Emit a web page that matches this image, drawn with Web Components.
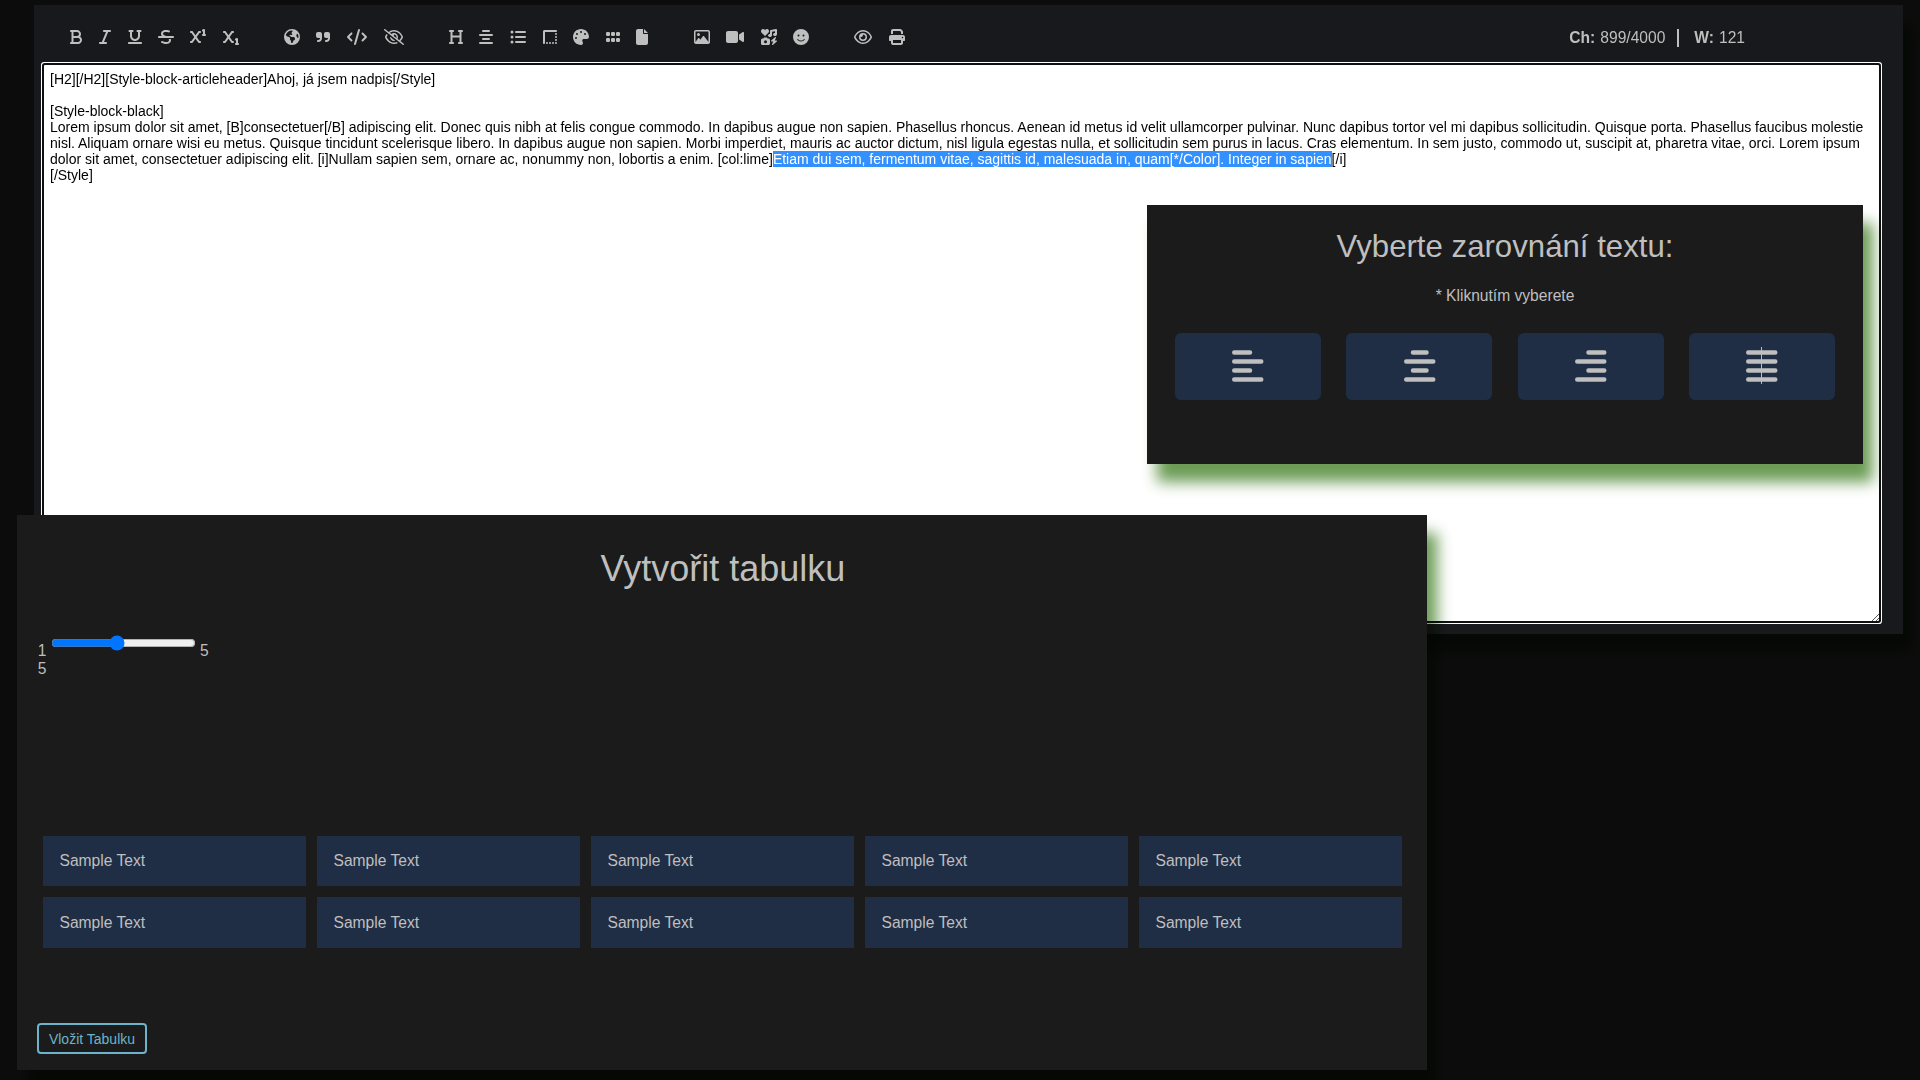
<!DOCTYPE html>
<html lang="cs"><head><meta charset="utf-8"><title>Editor</title>
<style>
html,body{margin:0;height:100%;overflow:hidden;background:#0c0c0c}
body{font-family:"Liberation Sans",Arial,sans-serif;font-size:15.6px;line-height:1.15;color:#bfbfbf;position:relative}
align-dialog{position:absolute;left:1147px;top:205px}
table-dialog{position:absolute;left:17px;top:515px}
</style></head><body>
<bb-editor>
<bb-toolbar slot="toolbar"></bb-toolbar>
<bb-textarea>[H2][/H2][Style-block-articleheader]Ahoj, já jsem nadpis[/Style]

[Style-block-black]
Lorem ipsum dolor sit amet, [B]consectetuer[/B] adipiscing elit. Donec quis nibh at felis congue commodo. In dapibus augue non sapien. Phasellus rhoncus. Aenean id metus id velit ullamcorper pulvinar. Nunc dapibus tortor vel mi dapibus sollicitudin. Quisque porta. Phasellus faucibus molestie nisl. Aliquam ornare wisi eu metus. Quisque tincidunt scelerisque libero. In dapibus augue non sapien. Morbi imperdiet, mauris ac auctor dictum, nisl ligula egestas nulla, et sollicitudin sem purus in lacus. Cras elementum. In sem justo, commodo ut, suscipit at, pharetra vitae, orci. Lorem ipsum dolor sit amet, consectetuer adipiscing elit. [i]Nullam sapien sem, ornare ac, nonummy non, lobortis a enim. [col:lime]<bb-mark>Etiam dui sem, fermentum vitae, sagittis id, malesuada in, quam[*/Color]. Integer in sapien</bb-mark>[/i]
[/Style]</bb-textarea>
</bb-editor>
<align-dialog></align-dialog>
<table-dialog></table-dialog>
<script>
const X='M32 64C14.3 64 0 78.3 0 96s14.3 32 32 32H47.3l89.6 128L47.3 384H32c-17.7 0-32 14.3-32 32s14.3 32 32 32H64c10.4 0 20.2-5.1 26.2-13.6L176 311.8l85.8 122.6c6 8.6 15.8 13.6 26.2 13.6h32c17.7 0 32-14.3 32-32s-14.3-32-32-32H304.7L215.1 256l89.6-128H320c17.7 0 32-14.3 32-32s-14.3-32-32-32H288c-10.4 0-20.2 5.1-26.2 13.6L176 200.2 90.2 77.6C84.2 69.1 74.4 64 64 64H32z';
const one='c0-11.1-5.7-21.4-15.2-27.2s-21.2-6.4-31.1-1.4l-32 16c-15.8 7.9-22.2 27.1-14.3 42.9c5.6 11.2 16.9 17.7 28.6 17.7v80c-17.7 0-32 14.3-32 32s14.3 32 32 32h32 32c17.7 0 32-14.3 32-32s-14.3-32-32-32z';
const dot=(x,y,r=32)=>`M${x-r} ${y}a${r} ${r} 0 1 0 ${2*r} 0a${r} ${r} 0 1 0 ${-2*r} 0z`;
const bar=(x,y,w)=>`M${x+32} ${y}h${w-64}a32 32 0 1 1 0 64h${64-w}a32 32 0 1 1 0-64z`;
const sq=(x,y)=>`M${x+40} ${y}h48a40 40 0 0 1 40 40v48a40 40 0 0 1-40 40h-48a40 40 0 0 1-40-40v-48a40 40 0 0 1 40-40z`;
const ICONS={
bold:[384,'M0 64C0 46.3 14.3 32 32 32H80 96 224c70.7 0 128 57.3 128 128c0 31.3-11.3 60.1-30 82.3c37.1 22.4 62 63.1 62 109.7c0 70.7-57.3 128-128 128H96 80 32c-17.7 0-32-14.3-32-32s14.3-32 32-32H48V256 96H32C14.3 96 0 81.7 0 64zM224 224c35.3 0 64-28.7 64-64s-28.7-64-64-64H112V224H224zM112 288V416H256c35.3 0 64-28.7 64-64s-28.7-64-64-64H224 112z'],
italic:[384,'M128 64c0-17.7 14.3-32 32-32H352c17.7 0 32 14.3 32 32s-14.3 32-32 32H293.3L160 416h64c17.7 0 32 14.3 32 32s-14.3 32-32 32H32c-17.7 0-32-14.3-32-32s14.3-32 32-32H90.7L224 96H160c-17.7 0-32-14.3-32-32z'],
underline:[448,'M16 64c0-17.7 14.3-32 32-32h96c17.7 0 32 14.3 32 32s-14.3 32-32 32H128V224c0 53 43 96 96 96s96-43 96-96V96H304c-17.7 0-32-14.3-32-32s14.3-32 32-32h96c17.7 0 32 14.3 32 32s-14.3 32-32 32H384V224c0 88.4-71.6 160-160 160s-160-71.6-160-160V96H48C30.3 96 16 81.7 16 64zM0 448c0-17.7 14.3-32 32-32H416c17.7 0 32 14.3 32 32s-14.3 32-32 32H32c-17.7 0-32-14.3-32-32z'],
strike:[512,'M161.3 144c3.2-17.2 14-30.1 33.7-38.6c21.1-9 51.8-12.3 88.6-6.5c11.9 1.9 48.8 9.1 60.1 12c17.1 4.5 34.6-5.6 39.2-22.7s-5.6-34.6-22.7-39.2c-14.3-3.8-53.6-11.4-66.6-13.4c-44.7-7-88.3-4.2-123.7 10.9c-36.5 15.6-64.4 44.8-71.8 87.3c-.1 .6-.2 1.1-.2 1.7c-2.8 23.9 .5 45.6 10.1 64.6c4.5 9 10.2 16.9 16.7 23.9H32c-17.7 0-32 14.3-32 32s14.3 32 32 32H480c17.7 0 32-14.3 32-32s-14.3-32-32-32H270.1c-.1 0-.3-.1-.4-.1l-1.1-.3c-36-10.8-65.2-19.6-85.2-33.1c-9.3-6.3-15-12.6-18.2-19.1c-3.1-6.1-5.2-14.6-3.8-27.4zM348.9 337.2c2.7 6.5 4.4 15.8 1.9 30.1c-3 17.6-13.8 30.8-33.9 39.4c-21.1 9-51.7 12.3-88.5 6.5c-18-2.9-49.1-13.5-74.4-22.1c-5.6-1.9-11-3.7-15.9-5.4c-16.8-5.6-34.9 3.5-40.5 20.3s3.5 34.9 20.3 40.5c3.6 1.2 7.9 2.7 12.7 4.3c24.9 8.5 63.6 21.7 87.6 25.6l.2 0c44.7 7 88.3 4.2 123.7-10.9c36.5-15.6 64.4-44.8 71.8-87.3c3.6-21 2.7-40.4-3.1-58.1H335.1c7 5.6 11.4 11.2 13.9 17.2z'],
sup:[512,X+'M480 32'+one],
sub:[512,X+'M480 320'+one],
globe:[512,'M57.7 193l9.4 16.4c8.3 14.5 21.9 25.2 38 29.8L163 255.7c17.2 4.9 29 20.6 29 38.5v39.9c0 11 6.2 21 16 25.9s16 14.9 16 25.9v39c0 15.6 14.9 26.9 29.9 22.6c16.1-4.6 28.6-17.5 32.7-33.8l2.8-11.2c4.2-16.9 15.2-31.4 30.3-40l8.1-4.6c15-8.5 24.2-24.5 24.2-41.7v-8.3c0-12.7-5.1-24.9-14.1-33.9l-3.9-3.9c-9-9-21.2-14.1-33.9-14.1H257c-11.1 0-22.1-2.9-31.8-8.4l-34.5-19.7c-4.3-2.5-7.6-6.5-9.2-11.2c-3.2-9.6 1.1-20 10.2-24.5l5.9-3c6.6-3.3 14.3-3.9 21.3-1.5l23.2 7.7c8.2 2.7 17.2-.4 21.9-7.5c4.7-7 4.2-16.3-1.2-22.8l-13.6-16.3c-10-12-9.9-29.5 .3-41.3l15.7-18.3c8.8-10.3 10.2-25 3.5-36.7l-2.4-4.2c-3.5-.2-6.9-.3-10.4-.3C163.1 48 84.4 108.9 57.7 193zM464 256c0-36.8-9.6-71.4-26.4-101.5L412 164.8c-15.7 6.3-23.8 23.8-18.5 39.8l16.9 50.7c3.5 10.4 12 18.3 22.6 20.9l29.1 7.3c1.2-9 1.8-18.2 1.8-27.5zM0 256a256 256 0 1 1 512 0A256 256 0 1 1 0 256z'],
quote:[448,'M448 296c0 66.3-53.7 120-120 120h-8c-17.7 0-32-14.3-32-32s14.3-32 32-32h8c30.9 0 56-25.1 56-56v-8H320c-35.3 0-64-28.7-64-64V160c0-35.3 28.7-64 64-64h64c35.3 0 64 28.7 64 64v32 32 72zm-256 0c0 66.3-53.7 120-120 120H64c-17.7 0-32-14.3-32-32s14.3-32 32-32h8c30.9 0 56-25.1 56-56v-8H64c-35.3 0-64-28.7-64-64V160c0-35.3 28.7-64 64-64h64c35.3 0 64 28.7 64 64v32 32 72z'],
code:[640,'M392.8 1.2c-17-4.9-34.7 5-39.6 22l-128 448c-4.9 17 5 34.7 22 39.6s34.7-5 39.6-22l128-448c4.9-17-5-34.7-22-39.6zm80.6 120.1c-12.5 12.5-12.5 32.8 0 45.3L562.7 256l-89.4 89.4c-12.5 12.5-12.5 32.8 0 45.3s32.8 12.5 45.3 0l112-112c12.5-12.5 12.5-32.8 0-45.3l-112-112c-12.5-12.5-32.8-12.5-45.3 0zm-306.7 0c-12.5-12.5-32.8-12.5-45.3 0l-112 112c-12.5 12.5-12.5 32.8 0 45.3l112 112c12.5 12.5 32.8 12.5 45.3 0s12.5-32.8 0-45.3L77.3 256l89.4-89.4c12.5-12.5 12.5-32.8 0-45.3z'],
eyeslash:[640,'M38.8 5.1C28.4-3.1 13.3-1.2 5.1 9.2S-1.2 34.7 9.2 42.9l592 464c10.4 8.2 25.5 6.3 33.7-4.1s6.3-25.5-4.1-33.7L525.6 386.7c39.6-40.6 66.4-86.1 79.9-118.4c3.3-7.9 3.3-16.7 0-24.6c-14.9-35.7-46.2-87.7-93-131.1C465.5 68.8 400.8 32 320 32c-68.2 0-125 26.3-169.3 60.8L38.8 5.1zm151 118.3C226 97.7 269.5 80 320 80c65.2 0 118.8 29.6 159.9 67.7C518.4 183.5 545 226 558.6 256c-12.6 28-36.6 66.8-70.9 100.9l-53.8-42.2c9.1-17.6 14.2-37.5 14.2-58.7c0-70.7-57.3-128-128-128c-32.2 0-61.7 11.9-84.2 31.5l-46.1-36.1zM394.9 284.2l-81.5-63.9c4.2-8.5 6.6-18.2 6.6-28.3c0-5.5-.7-10.9-2-16c.7 0 1.3 0 2 0c44.2 0 80 35.8 80 80c0 9.9-1.8 19.4-5.1 28.2zm9.4 130.3C378.8 425.4 350.7 432 320 432c-65.2 0-118.8-29.6-159.9-67.7C121.6 328.5 95 286 81.4 256c8.3-18.4 21.5-41.5 39.4-64.8L83.1 161.5C60.3 191.2 44 220.8 34.5 243.7c-3.3 7.9-3.3 16.7 0 24.6c14.9 35.7 46.2 87.7 93 131.1C174.5 443.2 239.2 480 320 480c47.8 0 89.9-12.9 126.2-32.5l-41.9-33zM192 256c0 70.7 57.3 128 128 128c13.3 0 26.1-2 38.2-5.8L302 334c-23.5-5.4-43.1-21.2-53.7-42.3l-56.1-44.2c-.2 2.8-.3 5.6-.3 8.5z'],
heading:[448,'M0 64C0 46.3 14.3 32 32 32H80h48c17.7 0 32 14.3 32 32s-14.3 32-32 32H112V208H336V96H320c-17.7 0-32-14.3-32-32s14.3-32 32-32h48 48c17.7 0 32 14.3 32 32s-14.3 32-32 32H400V240 416h16c17.7 0 32 14.3 32 32s-14.3 32-32 32H368 320c-17.7 0-32-14.3-32-32s14.3-32 32-32h16V272H112V416h16c17.7 0 32 14.3 32 32s-14.3 32-32 32H80 32c-17.7 0-32-14.3-32-32s14.3-32 32-32H48V240 96H32C14.3 96 0 81.7 0 64z'],
center:[448,bar(96,32,256)+bar(0,160,448)+bar(96,288,256)+bar(0,416,448)],
left:[448,bar(0,32,288)+bar(0,160,448)+bar(0,288,288)+bar(0,416,448)],
right:[448,bar(160,32,288)+bar(0,160,448)+bar(160,288,288)+bar(0,416,448)],
justify:[448,bar(0,32,448)+bar(0,160,448)+bar(0,288,448)+bar(0,416,448)],
list:[512,dot(64,96,48)+dot(64,256,48)+dot(64,416,48)+bar(160,64,352)+bar(160,224,352)+bar(160,384,352)],
border:[448,'M0 448c0 17.7 14.3 32 32 32s32-14.3 32-32V96H416c17.7 0 32-14.3 32-32s-14.3-32-32-32H48C21.5 32 0 53.5 0 80V448z'+dot(128,448)+dot(224,448)+dot(320,448)+dot(416,448)+dot(416,352)+dot(416,256)+dot(416,160)],
palette:[512,'M512 256c0 .9 0 1.8 0 2.7c-.4 36.5-33.6 61.3-70.1 61.3H344c-26.5 0-48 21.5-48 48c0 3.4 .4 6.7 1 9.9c2.1 10.2 6.5 20 10.8 29.9c6.1 13.8 12.1 27.5 12.1 42c0 31.8-21.6 60.7-53.4 62c-3.5 .1-7 .2-10.6 .2C114.6 512 0 397.4 0 256S114.6 0 256 0S512 114.6 512 256zM128 288a32 32 0 1 0 -64 0 32 32 0 1 0 64 0zm0-96a32 32 0 1 0 0-64 32 32 0 1 0 0 64zM288 96a32 32 0 1 0 -64 0 32 32 0 1 0 64 0zm96 96a32 32 0 1 0 0-64 32 32 0 1 0 0 64z'],
grip:[448,sq(0,96)+sq(160,96)+sq(320,96)+sq(0,288)+sq(160,288)+sq(320,288)],
file:[384,'M0 64C0 28.7 28.7 0 64 0H224V128c0 17.7 14.3 32 32 32H384V448c0 35.3-28.7 64-64 64H64c-35.3 0-64-28.7-64-64V64zm384 64H256V0L384 128z'],
image:[512,'M448 80c8.8 0 16 7.2 16 16V415.8l-5-6.5-136-176c-4.5-5.9-11.6-9.3-19-9.3s-14.4 3.4-19 9.3L202 340.7l-30.5-42.7C167 291.7 159.8 288 152 288s-15 3.7-19.5 10.1l-80 112L48 416.3l0-.3V96c0-8.8 7.2-16 16-16H448zM64 32C28.7 32 0 60.7 0 96V416c0 35.3 28.7 64 64 64H448c35.3 0 64-28.7 64-64V96c0-35.3-28.7-64-64-64H64zm80 192a48 48 0 1 0 0-96 48 48 0 1 0 0 96z'],
video:[576,'M0 128C0 92.7 28.7 64 64 64H320c35.3 0 64 28.7 64 64V384c0 35.3-28.7 64-64 64H64c-35.3 0-64-28.7-64-64V128zM559.1 99.8c10.4 5.6 16.9 16.4 16.9 28.2V384c0 11.8-6.5 22.6-16.9 28.2s-23 5-32.9-1.6l-96-64L416 337.1V320 192 174.9l14.2-9.5 96-64c9.8-6.5 22.4-7.2 32.9-1.6z'],
icons:[512,'M500.3 7.3C507.7 13.3 512 22.4 512 32V176c0 26.5-28.7 48-64 48s-64-21.5-64-48s28.7-48 64-48V71L352 90.2V208c0 26.5-28.7 48-64 48s-64-21.5-64-48s28.7-48 64-48V64c0-15.3 10.8-28.4 25.7-31.4l160-32c9.4-1.9 19.1 .6 26.6 6.6zM74.7 304l11.8-17.8c5.9-8.9 15.9-14.2 26.6-14.2h61.7c10.7 0 20.7 5.3 26.6 14.2L213.3 304H240c26.5 0 48 21.5 48 48V464c0 26.5-21.5 48-48 48H48c-26.5 0-48-21.5-48-48V352c0-26.5 21.5-48 48-48H74.7zM192 408a48 48 0 1 0 -96 0 48 48 0 1 0 96 0zM478.7 278.3L440.3 368H496c6.7 0 12.6 4.1 15 10.4s.6 13.3-4.4 17.7l-128 112c-5.6 4.9-13.9 5.3-19.9 .9s-8.2-12.4-5.3-19.2L391.7 400H336c-6.7 0-12.6-4.1-15-10.4s-.6-13.3 4.4-17.7l128-112c5.6-4.9 13.9-5.3 19.9-.9s8.2 12.4 5.3 19.2zm-339-59.2c-6.5 6.5-17 6.5-23 0L19.9 119.2c-28-29-26.5-76.9 5-103.9c27-23.5 68.4-19 93.4 6.5l10 10.5 9.5-10.5c25-25.5 65.9-30 93.9-6.5c31 27 32.5 74.9 4.5 103.9l-96.4 99.9z'],
smile:[512,'M256 512A256 256 0 1 0 256 0a256 256 0 1 0 0 512zM164.1 325.5C182 346.2 212.6 368 256 368s74-21.8 91.9-42.5c5.8-6.7 15.9-7.4 22.6-1.6s7.4 15.9 1.6 22.6C349.8 372.1 311.1 400 256 400s-93.8-27.9-116.1-53.5c-5.8-6.7-5.1-16.8 1.6-22.6s16.8-5.1 22.6 1.6zM144.4 208a32 32 0 1 1 64 0 32 32 0 1 1 -64 0zm192-32a32 32 0 1 1 0 64 32 32 0 1 1 0-64z'],
eye:[576,'M288 80c-65.2 0-118.8 29.6-159.9 67.7C89.6 183.5 63 226 49.4 256c13.6 30 40.2 72.5 78.6 108.3C169.2 402.4 222.8 432 288 432s118.8-29.6 159.9-67.7C486.4 328.5 513 286 526.6 256c-13.6-30-40.2-72.5-78.6-108.3C406.8 109.6 353.2 80 288 80zM95.4 112.6C142.5 68.8 207.2 32 288 32s145.5 36.8 192.6 80.6c46.8 43.5 78.1 95.4 93 131.1c3.3 7.9 3.3 16.7 0 24.6c-14.9 35.7-46.2 87.7-93 131.1C433.5 443.2 368.8 480 288 480s-145.5-36.8-192.6-80.6C48.6 356 17.3 304 2.5 268.3c-3.3-7.9-3.3-16.7 0-24.6C17.3 208 48.6 156 95.4 112.6zM288 336c44.2 0 80-35.8 80-80s-35.8-80-80-80c-.7 0-1.3 0-2 0c1.3 5.1 2 10.5 2 16c0 35.3-28.7 64-64 64c-5.5 0-10.9-.7-16-2c0 .7 0 1.3 0 2c0 44.2 35.8 80 80 80zm0-208a128 128 0 1 1 0 256 128 128 0 1 1 0-256z'],
print:[512,'M128 0C92.7 0 64 28.7 64 64v96h64V64H354.7L384 93.3V160h64V93.3c0-17-6.7-33.3-18.7-45.3L400 18.7C388 6.7 371.7 0 354.7 0H128zM384 352v32 64H128V384 368 352H384zm64 32h32c17.7 0 32-14.3 32-32V256c0-35.3-28.7-64-64-64H64c-35.3 0-64 28.7-64 64v96c0 17.7 14.3 32 32 32H64v64c0 35.3 28.7 64 64 64H384c35.3 0 64-28.7 64-64V384zM432 248a24 24 0 1 1 0 48 24 24 0 1 1 0-48z']};
const define=(name,html)=>customElements.define(name,class extends HTMLElement{
  constructor(){super();this.attachShadow({mode:'open'}).innerHTML=typeof html==='function'?html(this):html}});
/* Panel shadow multiplied onto what lies under it: green over white, near black over dark. */
const SHADOW=':host::before{content:"";position:absolute;inset:0;pointer-events:none;mix-blend-mode:multiply;box-shadow:10px 18px 14px #6c9c56}';
customElements.define('bb-icon',class extends HTMLElement{
  connectedCallback(){const [w,d]=ICONS[this.getAttribute('name')];const s=+(this.getAttribute('size')||16);
    (this.shadowRoot||this.attachShadow({mode:'open'})).innerHTML=`<style>:host{display:block;flex:none;width:${w/512*s}px;height:${s}px}svg{display:block;width:100%;height:100%;fill:currentColor;overflow:visible}</style><svg viewBox="0 0 ${w} 512"><path d="${d}"/></svg>`}});
define('bb-mark','<style>:host{background:#3390ff;color:#fff}</style><slot></slot>');
define('bb-textarea',`<style>:host{display:block;position:relative;box-sizing:border-box;height:556px;margin:0 24px 0 10px;padding:6px 6px;font-size:14px;line-height:16px;white-space:pre-wrap;color:#000;background:#fff;box-shadow:0 0 0 2px #101010,0 0 0 3px #fff;border-radius:1px}
svg{position:absolute;right:0;bottom:0}</style><slot></slot><svg width="8" height="8" stroke="#555" stroke-width="1"><path d="M1 8L8 1M5 8L8 5"/></svg>`);
define('bb-editor',`<style>:host{display:block;position:relative;top:5px;box-sizing:border-box;width:1869px;height:629px;margin-left:34px;background:#18191d}${SHADOW}</style><slot name="toolbar"></slot><slot></slot>`);
const TOOLS=[['bold',69.5],['italic',98.5],['underline',127.5],['strike',158],['sup',190],['sub',223],['globe',284],['quote',316],['code',347],['eyeslash',384],['heading',448.5],['center',479],['list',510],['border',542.5],['palette',573],['grip',606],['file',636],['image',693.5],['video',726],['icons',761],['smile',793],['eye',854],['print',889]];
let at=34;
const tools=TOOLS.map(([n,x])=>{const m=x-at;at=x+ICONS[n][0]/32;return `<bb-icon name="${n}" style="margin-left:${m}px"></bb-icon>`}).join('');
define('bb-toolbar',`<style>:host{display:flex;align-items:center;height:60px;padding-top:4px;box-sizing:border-box;color:#bfbfbf}
.count{display:flex;align-items:center;margin-left:auto;margin-right:158px;padding-top:2px}i{width:2px;height:18px;background:#bfbfbf;margin:0 15px 0 12px}b{margin-right:5px}</style>${tools}<div class="count"><b>Ch:</b><span>899/4000</span><i></i><b>W:</b><span>121</span></div>`);
define('align-option',e=>`<style>:host{display:grid;place-items:center;position:relative;width:146px;height:67px;background:#1f2e45;border-radius:6px;color:#bfbfbf}:host([caret])::after{content:"";position:absolute;left:72px;top:14px;width:1px;height:37px;background:#bfbfbf}bb-icon{margin-bottom:2px}</style><bb-icon size="36" name="${e.getAttribute('name')}"></bb-icon>`);
define('align-dialog',`<style>:host{display:block;box-sizing:border-box;width:716px;height:259px;padding:23px 28px 0;background:#1b1b1b;text-align:center}${SHADOW}
h2{margin:0;font-weight:400;font-size:31.2px;line-height:38px}p{margin:21px 0 0;line-height:18px;height:18px}.row{display:flex;justify-content:space-between;margin-top:28px}</style>
<h2>Vyberte zarovnání textu:</h2><p>* Kliknutím vyberete</p><div class="row"><align-option name="left"></align-option><align-option name="center"></align-option><align-option name="right"></align-option><align-option name="justify" caret></align-option></div>`);
define('sample-cell','<style>:host{display:block;box-sizing:border-box;padding:16px 16.5px;line-height:18px;background:#1f2e45}</style><slot></slot>');
define('table-dialog',`<style>:host{display:block;box-sizing:border-box;width:1410px;height:555px;padding:33px 20px 0;background:#1b1b1b}${SHADOW}
h2{margin:0;padding-left:2px;font-weight:400;font-size:36px;line-height:42px;text-align:center}
.range{display:flex;align-items:flex-start;height:18px;margin:52px 0 0 .7px;line-height:18px}
.range input{width:145px;height:16px;margin:-7px 3.5px 0 5px}
.val{line-height:18px;margin-left:.7px}
.grid{display:grid;grid-template-columns:repeat(5,263px);grid-template-rows:50px 51px;gap:11px;margin:158px 0 0 6px}
sample-cell:nth-child(n+6){padding-top:17px}
button{display:block;box-sizing:border-box;width:110px;height:31px;margin-top:75px;padding:0;border:2px solid #6cb4cc;border-radius:4px;background:none;color:#6cb4cc;font:14px "Liberation Sans",sans-serif}</style>
<h2>Vytvořit tabulku</h2><div class="range"><span>1</span><input type="range" min="1" max="10" value="5"><span>5</span></div><div class="val">5</div>
<div class="grid">${'<sample-cell>Sample Text</sample-cell>'.repeat(10)}</div><button>Vložit Tabulku</button>`);
</script></body></html>
